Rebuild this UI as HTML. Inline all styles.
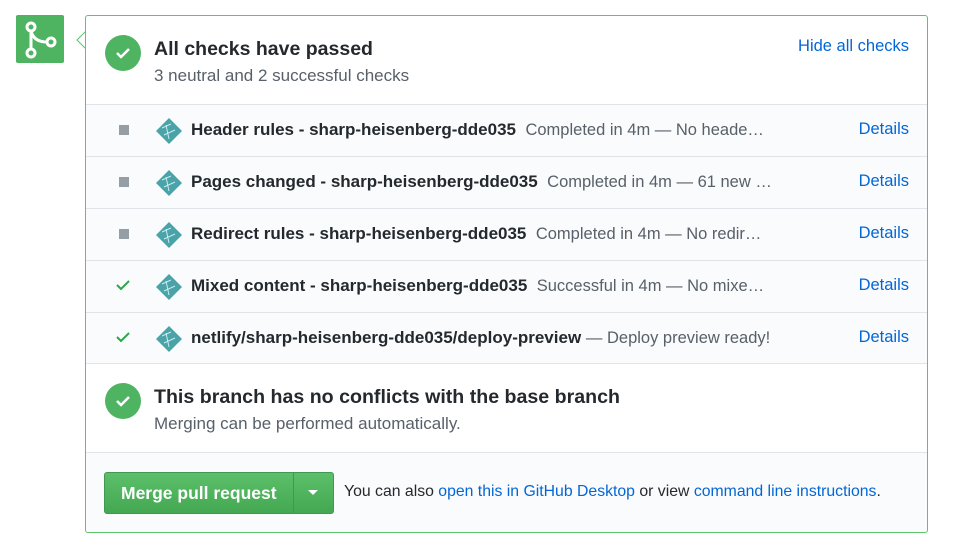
<!DOCTYPE html><html><head><style>
body{margin:0;width:960px;height:551px;background:#fff;font-family:"Liberation Sans",sans-serif;position:relative;overflow:hidden}
.a{position:absolute}
.box{left:85px;top:15px;width:841px;height:516px;border:1px solid #5cc46c;border-radius:3px;background:#fff}
.circ{width:36px;height:36px;border-radius:50%;background:#4eb462}
.row{position:absolute;left:0;width:841px;height:51px;background:#fafbfc;border-top:1px solid #e1e4e8;font-size:17px;color:#24292e}
.row .t{position:absolute;left:105px;top:15px;white-space:nowrap}
.row b{font-weight:bold}
.row .g{color:#586069;font-size:16.5px}
.row .d{position:absolute;right:18px;top:15px;color:#0366d6;font-size:16.5px}
.sq{position:absolute;left:33px;top:20px;width:10px;height:10px;background:#959da5}
.ck{position:absolute;left:29px;top:16px}
.nl{position:absolute;left:70px;top:13px}
a{color:#0366d6;text-decoration:none}
</style></head><body>
<div class="a" style="left:16px;top:15px;width:48px;height:48px;background:#4eb462;border-radius:2px">
<svg width="48" height="48"><g fill="none" stroke="#fff" stroke-width="3"><circle cx="15" cy="12" r="4"/><circle cx="15" cy="38" r="4"/><circle cx="35" cy="27" r="4"/><path d="M15 16V34M15 16c2 8 8 11 16 11"/></g></svg></div>
<svg class="a" style="left:76px;top:31px" width="11" height="20"><path d="M10 0L1 9L10 18" fill="#fff" stroke="#5cc46c"/></svg>
<div class="a box">
<div class="a circ" style="left:19px;top:19px"><svg width="36" height="36"><path d="M12 18l4 4 8-8" fill="none" stroke="#fff" stroke-width="2.5"/></svg></div>
<div class="a" style="left:68px;top:22px;font-size:19.5px;font-weight:bold;color:#24292e">All checks have passed</div>
<div class="a" style="left:68px;top:50px;font-size:17px;color:#586069">3 neutral and 2 successful checks</div>
<div class="a" style="right:18px;top:21px;font-size:16.5px;color:#0366d6">Hide all checks</div>
<div class="row" style="top:88px"><div class="sq"></div><svg class="nl" width="26" height="26"><path d="M13 0L26 13L13 26L0 13Z" fill="#4aa3a9"/><path d="M6 10L15 6M8 17L19 12M10 7L13 21" stroke="#c9ecec" stroke-width="1"/></svg><div class="t"><b>Header rules - sharp-heisenberg-dde035</b> &nbsp;<span class="g">Completed in 4m — No heade…</span></div><div class="d">Details</div></div>
<div class="row" style="top:140px"><div class="sq"></div><svg class="nl" width="26" height="26"><path d="M13 0L26 13L13 26L0 13Z" fill="#4aa3a9"/><path d="M6 10L15 6M8 17L19 12M10 7L13 21" stroke="#c9ecec" stroke-width="1"/></svg><div class="t"><b>Pages changed - sharp-heisenberg-dde035</b> &nbsp;<span class="g">Completed in 4m — 61 new …</span></div><div class="d">Details</div></div>
<div class="row" style="top:192px"><div class="sq"></div><svg class="nl" width="26" height="26"><path d="M13 0L26 13L13 26L0 13Z" fill="#4aa3a9"/><path d="M6 10L15 6M8 17L19 12M10 7L13 21" stroke="#c9ecec" stroke-width="1"/></svg><div class="t"><b>Redirect rules - sharp-heisenberg-dde035</b> &nbsp;<span class="g">Completed in 4m — No redir…</span></div><div class="d">Details</div></div>
<div class="row" style="top:244px"><svg class="ck" width="16" height="16"><path d="M2 8l4 4 8-8" fill="none" stroke="#28a745" stroke-width="2"/></svg><svg class="nl" width="26" height="26"><path d="M13 0L26 13L13 26L0 13Z" fill="#4aa3a9"/><path d="M6 10L15 6M8 17L19 12M10 7L13 21" stroke="#c9ecec" stroke-width="1"/></svg><div class="t"><b>Mixed content - sharp-heisenberg-dde035</b> &nbsp;<span class="g">Successful in 4m — No mixe…</span></div><div class="d">Details</div></div>
<div class="row" style="top:296px"><svg class="ck" width="16" height="16"><path d="M2 8l4 4 8-8" fill="none" stroke="#28a745" stroke-width="2"/></svg><svg class="nl" width="26" height="26"><path d="M13 0L26 13L13 26L0 13Z" fill="#4aa3a9"/><path d="M6 10L15 6M8 17L19 12M10 7L13 21" stroke="#c9ecec" stroke-width="1"/></svg><div class="t"><b>netlify/sharp-heisenberg-dde035/deploy-preview</b> <span class="g">— Deploy preview ready!</span></div><div class="d">Details</div></div>
<div class="a" style="left:0;top:347px;width:841px;border-top:1px solid #e1e4e8"></div>
<div class="a circ" style="left:19px;top:367px"><svg width="36" height="36"><path d="M12 18l4 4 8-8" fill="none" stroke="#fff" stroke-width="2.5"/></svg></div>
<div class="a" style="left:68px;top:370px;font-size:19.6px;font-weight:bold;color:#24292e">This branch has no conflicts with the base branch</div>
<div class="a" style="left:68px;top:398px;font-size:17px;color:#586069">Merging can be performed automatically.</div>
<div class="a" style="left:0;top:436px;width:841px;height:79px;background:#fafbfc;border-top:1px solid #e1e4e8;border-radius:0 0 3px 3px"></div>
<div class="a" style="left:18px;top:456px;width:228px;height:40px;border:1px solid #3f9a4f;border-radius:3px;background:linear-gradient(#5cbf6a,#44a852)">
<div class="a" style="left:16px;top:10px;color:#fff;font-size:17.5px;font-weight:bold">Merge pull request</div>
<div class="a" style="left:188px;top:0;height:40px;border-left:1px solid #3d9a4d"></div>
<svg class="a" style="left:202px;top:16px" width="12" height="8"><path d="M1 1h10L6 6z" fill="#fff"/></svg></div>
<div class="a" style="left:258px;top:467px;font-size:15.8px;color:#24292e;white-space:nowrap">You can also <a>open this in GitHub Desktop</a> or view <a>command line instructions</a>.</div>
</div>
</body></html>
